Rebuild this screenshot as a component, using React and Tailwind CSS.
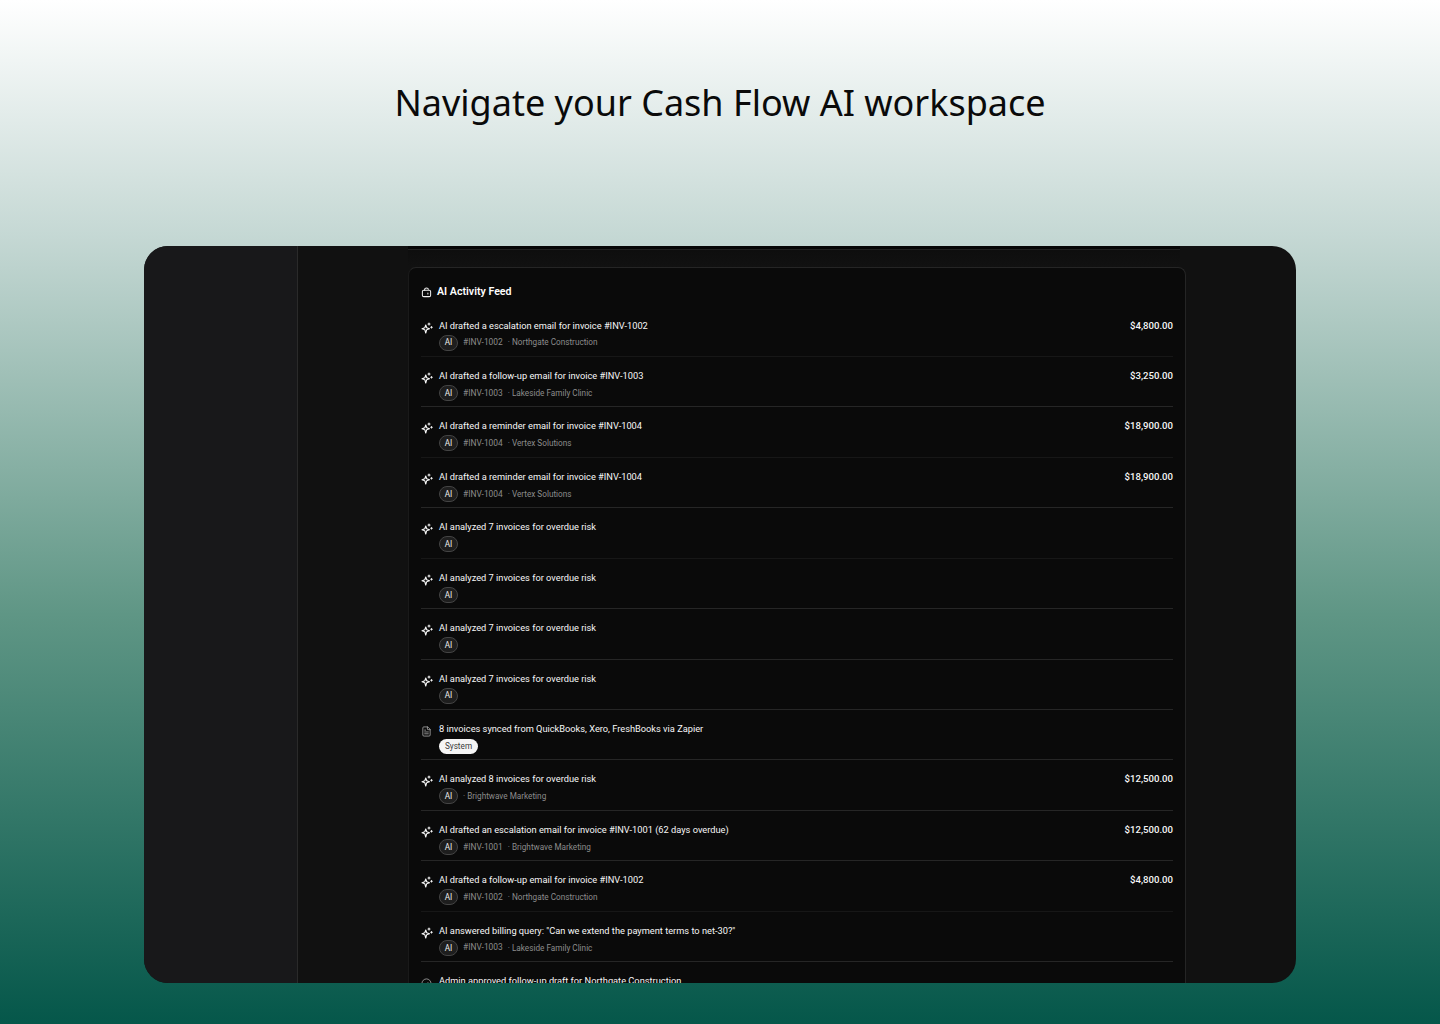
import { CircleCheck, FileText } from 'lucide-react'

const rows = [
  { title: 'AI drafted a escalation email for invoice #INV-1002', invoice: '#INV-1002', client: 'Northgate Construction', amount: '$4,800.00', faint: true },
  { title: 'AI drafted a follow-up email for invoice #INV-1003', invoice: '#INV-1003', client: 'Lakeside Family Clinic', amount: '$3,250.00' },
  { title: 'AI drafted a reminder email for invoice #INV-1004', invoice: '#INV-1004', client: 'Vertex Solutions', amount: '$18,900.00', faint: true },
  { title: 'AI drafted a reminder email for invoice #INV-1004', invoice: '#INV-1004', client: 'Vertex Solutions', amount: '$18,900.00' },
  { title: 'AI analyzed 7 invoices for overdue risk', faint: true },
  { title: 'AI analyzed 7 invoices for overdue risk' },
  { title: 'AI analyzed 7 invoices for overdue risk' },
  { title: 'AI analyzed 7 invoices for overdue risk' },
  { title: '8 invoices synced from QuickBooks, Xero, FreshBooks via Zapier', system: true },
  { title: 'AI analyzed 8 invoices for overdue risk', client: 'Brightwave Marketing', amount: '$12,500.00' },
  { title: 'AI drafted an escalation email for invoice #INV-1001 (62 days overdue)', invoice: '#INV-1001', client: 'Brightwave Marketing', amount: '$12,500.00' },
  { title: 'AI drafted a follow-up email for invoice #INV-1002', invoice: '#INV-1002', client: 'Northgate Construction', amount: '$4,800.00', faint: true },
  { title: 'AI answered billing query: "Can we extend the payment terms to net-30?"', invoice: '#INV-1003', client: 'Lakeside Family Clinic' },
]

function SparkIcon() {
  return (
    <svg className="block" width="12" height="12" viewBox="0 0 24 24" fill="none" stroke="currentColor" strokeWidth="2.2" strokeLinecap="round" strokeLinejoin="round">
      <path d="M9.5 6l1.9 5.6 5.6 1.9-5.6 1.9L9.5 22l-1.9-6.6L2 13.5l5.6-1.9z" />
      <path d="M16 2v4M14 4h4" />
      <path d="M21 9v3M19.5 10.5h3" />
    </svg>
  )
}

function FeedIcon() {
  return (
    <svg className="block" width="11" height="11" viewBox="0 0 24 24" fill="none" stroke="currentColor" strokeWidth="2.2" strokeLinecap="round" strokeLinejoin="round">
      <rect x="3" y="7" width="18" height="14" rx="3" />
      <path d="M8 7V5a4 3 0 0 1 8 0" />
      <path d="M15 13v2" />
    </svg>
  )
}

function FeedRow({ row }) {
  return (
    <div className={`flex h-[50.45px] shrink-0 border-b pt-[12px] ${row.faint ? 'border-[#171717]' : 'border-[#262626]'}`}>
      <div className="w-[18px] shrink-0 pt-[3px]">
        {row.system ? (
          <FileText size={11} strokeWidth={1.5} className="mt-[1px] text-[#c4c4c4]" />
        ) : (
          <span className="text-[#f5f5f5]"><SparkIcon /></span>
        )}
      </div>
      <div className="min-w-0 flex-1">
        <div className="flex justify-between text-[9.25px] leading-[13px] text-[#f7f7f7]">
          <span>{row.title}</span>
          {row.amount && <span className="text-[9.6px] font-medium">{row.amount}</span>}
        </div>
        <div className="mt-[3px] flex h-[16px] items-center text-[8.2px] text-[#8c8c8c]">
          {row.system ? (
            <span className="flex h-[15px] w-[39px] items-center justify-center rounded-full bg-[#f5f5f5] text-[#3a3a3a]">System</span>
          ) : (
            <span className="flex h-[16px] w-[19px] items-center justify-center rounded-full border border-[#444444] bg-[#1e1e1e] text-[#ededed]">AI</span>
          )}
          {row.invoice && <span className="ml-[5px] text-[8.4px]">{row.invoice}</span>}
          {row.client && <span className="ml-[5px]">· {row.client}</span>}
        </div>
      </div>
    </div>
  )
}

export default function App() {
  return (
    <div className="flex h-[1024px] flex-col items-center bg-[linear-gradient(180deg,#ffffff_0%,#c5d8d4_23%,#5f9685_60%,#05574a_100%)] font-['Roboto',sans-serif]">
      <h1 className="mt-[78px] h-[168px] font-['Noto_Sans',sans-serif] text-[36px] leading-[50px] text-[#0a0a0a]">
        Navigate your Cash Flow AI workspace
      </h1>

      <div className="flex h-[737px] w-[1152px] overflow-hidden rounded-[24px] bg-[#111111]">
        <aside className="w-[154px] shrink-0 border-r border-[#2a2a2a] bg-[#18181a]" />
        <main className="flex min-w-0 flex-1 flex-col pl-[110px] pr-[110px]">
          <div className="h-[21px] w-[772px] shrink-0 bg-[linear-gradient(180deg,#060606_0,#060606_3px,#202020_3px,#202020_4px,#0e0e0e_4px,#111111_100%)]" />
          <section className="flex-1 overflow-hidden rounded-t-[8px] border border-b-0 border-[#252525] border-l-[#1a1a1a] bg-[#0a0a0a] px-[12px]">
            <div className="flex h-[38.5px] items-start gap-[4px] pt-[17px]">
              <span className="pt-[2px] text-[#f2f2f2]"><FeedIcon /></span>
              <h2 className="ml-[1px] text-[10.65px] leading-[14px] font-semibold text-white">AI Activity Feed</h2>
            </div>
            <div className="flex flex-col">
              {rows.map((row, i) => (
                <FeedRow key={i} row={row} />
              ))}
              <div className="flex pt-[12px]">
                <div className="w-[18px] shrink-0 pt-[4px]">
                  <CircleCheck size={11} strokeWidth={1.5} className="text-[#c4c4c4]" />
                </div>
                <span className="text-[9.25px] leading-[13px] text-[#f7f7f7]">Admin approved follow-up draft for Northgate Construction</span>
              </div>
            </div>
          </section>
        </main>
      </div>
    </div>
  )
}
